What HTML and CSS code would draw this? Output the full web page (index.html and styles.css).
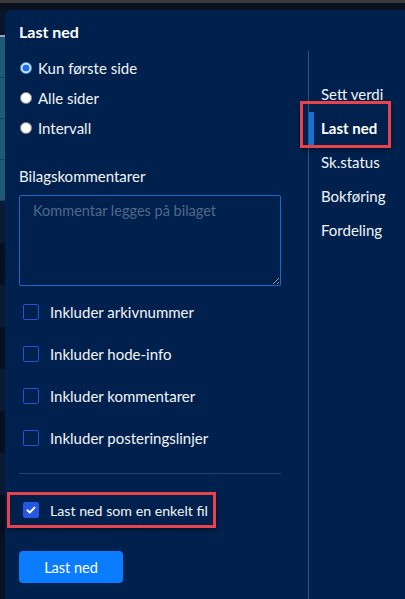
FILE: index.html
```html
<!DOCTYPE html>
<html lang="no">
<head>
<meta charset="utf-8">
<title>Last ned</title>
<link rel="stylesheet" href="styles.css">
</head>
<body>
<div class="topbar"></div>
<div class="stage">
  <div class="strip">
    <div class="s s-dark1"></div>
    <div class="s s-line"></div>
    <div class="s s-teal"></div>
    <div class="s s-teal"></div>
    <div class="s s-teal"></div>
    <div class="s s-teal"></div>
    <div class="s s-dark2"></div>
    <div class="s s-dark3"></div>
    <div class="s s-dark2"></div>
    <div class="s s-dark3"></div>
    <div class="s s-dark2"></div>
    <div class="s s-dark3"></div>
    <div class="s s-dark2"></div>
    <div class="s s-dark3"></div>
  </div>
  <div class="panel">
    <div class="main">
      <h1 class="title">Last ned</h1>
      <div class="radios">
        <label class="radio"><input type="radio" name="pages" checked><span>Kun første side</span></label>
        <label class="radio"><input type="radio" name="pages"><span>Alle sider</span></label>
        <label class="radio"><input type="radio" name="pages"><span>Intervall</span></label>
      </div>
      <div class="field-label">Bilagskommentarer</div>
      <textarea class="comment" placeholder="Kommentar legges på bilaget"></textarea>
      <div class="checks">
        <div class="check"><span class="box"></span><span>Inkluder arkivnummer</span></div>
        <div class="check"><span class="box"></span><span>Inkluder hode-info</span></div>
        <div class="check"><span class="box"></span><span>Inkluder kommentarer</span></div>
        <div class="check"><span class="box"></span><span>Inkluder posteringslinjer</span></div>
      </div>
      <hr class="divider">
      <div class="check single"><span class="box checked"><svg viewBox="0 0 16 16" width="16" height="16"><path d="M4 8.3l2.6 2.6L12 5.3" fill="none" stroke="#fff" stroke-width="2.2" stroke-linecap="round" stroke-linejoin="round"/></svg></span><span class="single-label">Last ned som en enkelt fil</span></div>
      <button class="btn">Last ned</button>
    </div>
    <nav class="nav">
      <div class="nav-item">Sett verdi</div>
      <div class="nav-item active">Last ned<span class="highlight"></span></div>
      <div class="nav-item">Sk.status</div>
      <div class="nav-item">Bokføring</div>
      <div class="nav-item">Fordeling</div>
    </nav>
  </div>
</div>
</body>
</html>
```
FILE: styles.css
```css
* { box-sizing: border-box; }
html, body { margin: 0; padding: 0; }
body {
  width: 405px;
  height: 599px;
  overflow: hidden;
  background: #0a1222;
  font-family: Lato, "Noto Sans", sans-serif;
  color: #f2f4f8;
  font-size: 15px;
}
.topbar { height: 3px; background: #3b3b3b; border-bottom: 7px solid #0a1222; box-sizing: content-box; }
.stage { display: flex; height: 589px; }
.strip { width: 5px; display: flex; flex-direction: column; }
.s { width: 5px; }
.s-dark1 { height: 25px; background: #08142b; }
.s-line { height: 2px; background: #9aa3ad; }
.s-teal { height: 41px; background: #1f5a78; border-bottom: 1px solid #16445e; }
.s-dark2 { height: 42px; background: #0a1a35; }
.s-dark3 { height: 42px; background: #050f1f; }
.panel {
  flex: 1;
  display: flex;
  background: #00214e;
  border-top-left-radius: 6px;
}
.main { width: 303px; padding: 12px 27px 0 14px; }
.title { margin: 0; font-size: 16px; line-height: 20px; font-weight: 700; color: #fff; }
.radios { margin-top: 11px; }
.radio { display: flex; align-items: center; height: 30px; gap: 6px; }
.radio input { margin: 0 0 0 1px; width: 12px; height: 12px; accent-color: #1a6ff0; }
.field-label { margin-top: 23px; line-height: 20px; }
.comment {
  display: block;
  margin-top: 9px;
  width: 262px;
  height: 91px;
  background: transparent;
  border: 1px solid #1c6bc4;
  border-radius: 2px;
  padding: 6px 13px;
  font: 14.5px Lato, "Noto Sans", sans-serif;
  color: #fff;
  resize: both;
}
.comment::placeholder { color: #52678a; }
.checks { margin-top: 5px; }
.check { display: flex; align-items: center; height: 42px; padding-left: 4px; gap: 11px; white-space: nowrap; }
.box {
  width: 16px; height: 16px;
  border: 1.5px solid #1d57d8;
  border-radius: 2px;
  flex: none;
  display: flex; align-items: center; justify-content: center;
}
.box.checked { background: #2457e3; border-color: #2457e3; }
.divider { margin: 14px 0 0; border: 0; border-top: 1px solid #2a4168; width: 262px; }
.check.single {
  display: inline-flex;
  margin: 18px 0 0 -12px;
  height: 36px;
  width: 209px;
  border: 3px solid #e8434b;
  padding-left: 13px;
  box-shadow: 0 2px 5px rgba(0,0,0,.45);
}
.single-label { font-size: 14.2px; }
.btn {
  display: block;
  margin-top: 23px;
  width: 104px;
  height: 32px;
  border: 0;
  border-radius: 4px;
  background: #0a7cff;
  color: #fff;
  font: 14.5px Lato, "Noto Sans", sans-serif;
}
.nav {
  margin-top: 41px;
  border-left: 1px solid #3a5278;
  padding-top: 26px;
  flex: 1;
}
.nav-item { position: relative; height: 34px; line-height: 34px; padding-left: 12px; }
.nav-item.active { font-weight: 700; color: #fff; }
.nav-item.active::before {
  content: ""; position: absolute; left: 0; top: 1px; width: 5px; height: 33px; background: #1272d8;
}
.highlight {
  position: absolute; left: -9px; top: -10px; width: 91px; height: 47px;
  border: 3px solid #e8434b;
  box-shadow: 0 2px 5px rgba(0,0,0,.45);
}
```
